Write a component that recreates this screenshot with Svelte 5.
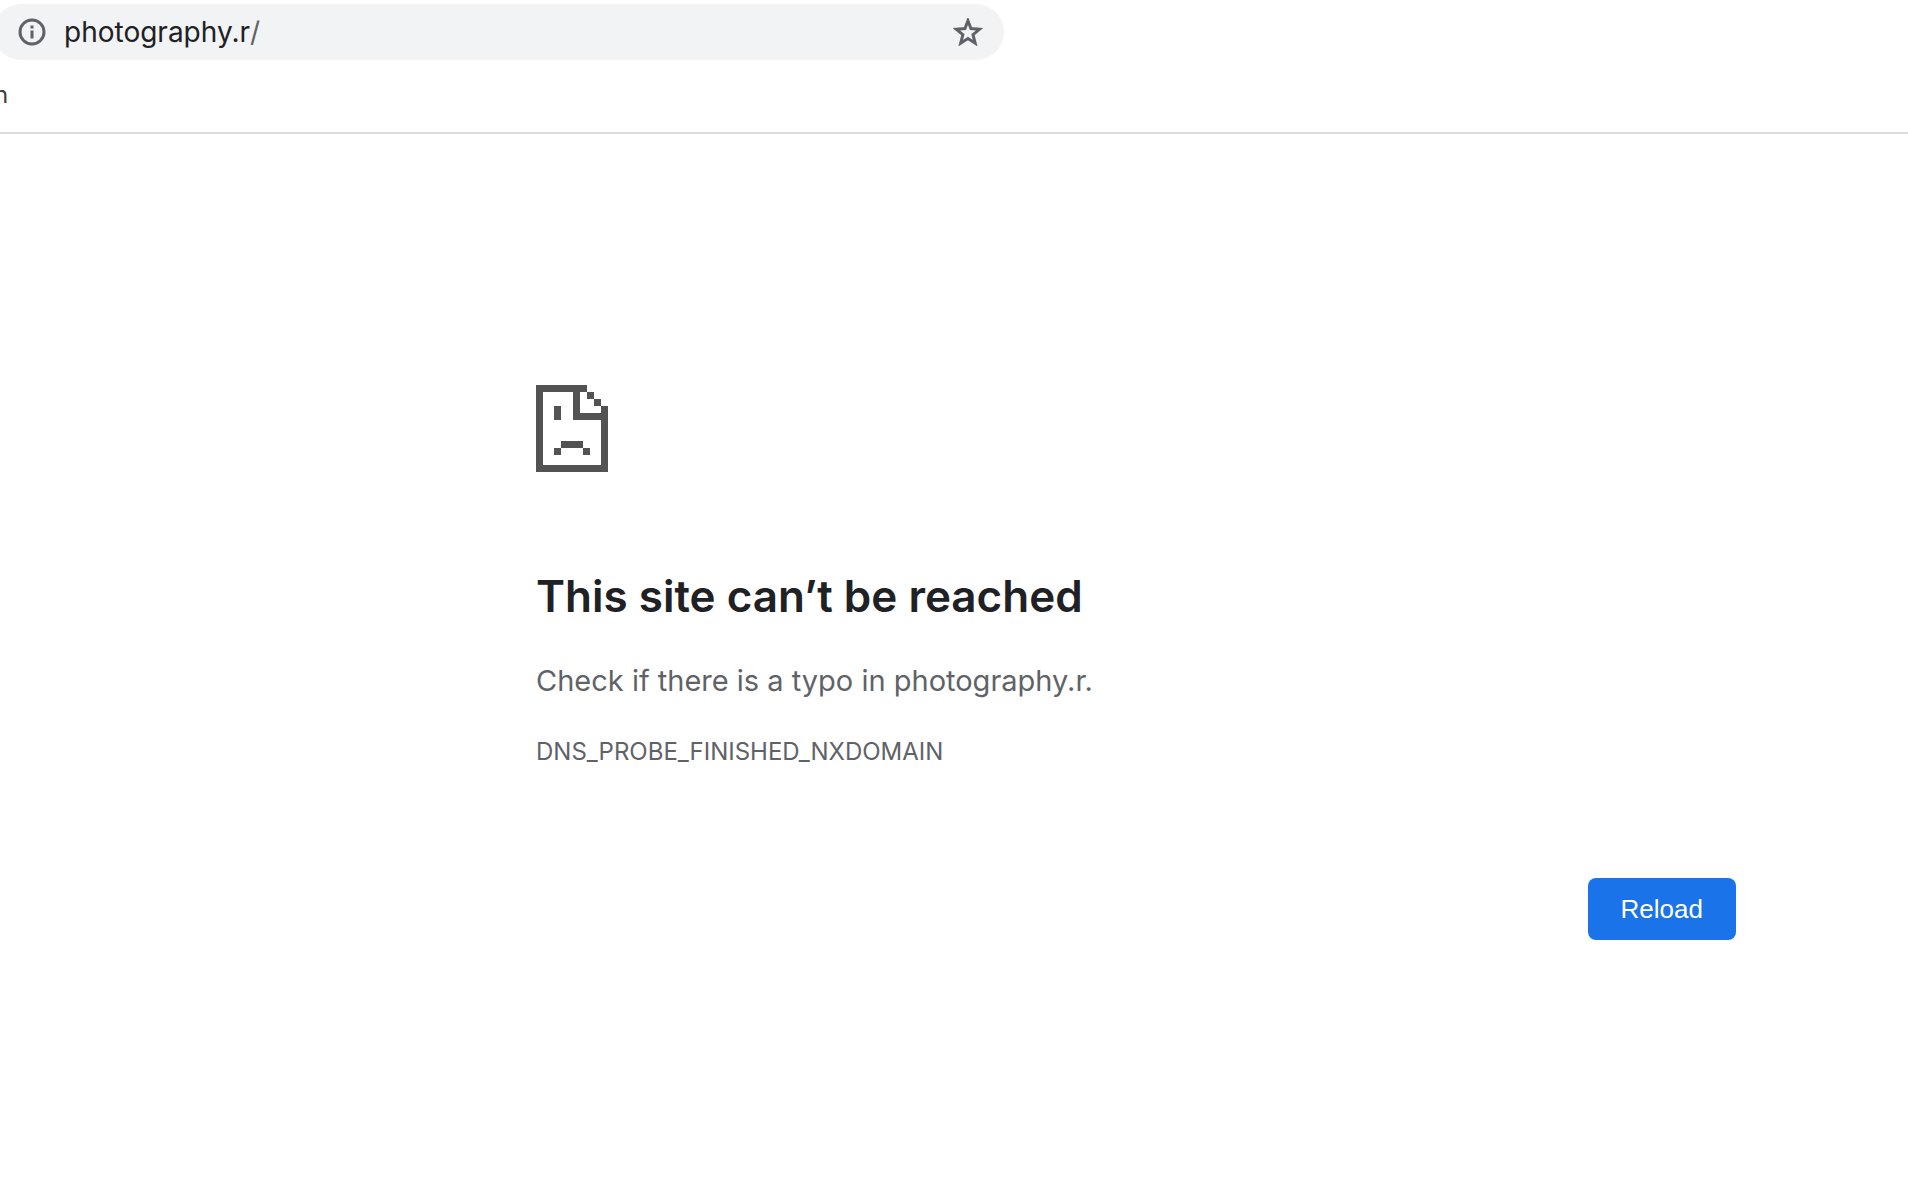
<script>
    let host = $state("photography.r");
    let failedHost = $state("photography.r");

    function reload(e) {
        e.preventDefault();
        failedHost = host;
    }
</script>

<header>
    <form class="omnibox" onsubmit={reload}>
        <button class="icon-btn" type="button" aria-label="View site information">
            <svg width="28" height="28" viewBox="0 0 28 28">
                <circle cx="14" cy="14" r="12" fill="none" stroke="#5f6368" stroke-width="3" />
                <path d="M12.5 7.5h3v3h-3zM12.5 12.5h3v8h-3z" fill="#5f6368" />
            </svg>
        </button>
        <div class="url">
            <input type="text" aria-label="Address bar" spellcheck="false" bind:value={host} />
            <span>/</span>
        </div>
        <button class="icon-btn" type="button" aria-label="Bookmark this page">
            <svg width="30" height="28" viewBox="0 0 30 28">
                <path
                    d="M15 3.8 L17.6 10.7 L25.2 11.2 L19.4 16 L21.3 23.4 L15 19.4 L8.7 23.4 L10.6 16 L4.8 11.2 L12.4 10.7 Z"
                    transform="translate(-2.3 -1.7) scale(1.15)"
                    fill="none"
                    stroke="#5f6368"
                    stroke-width="2.6"
                />
            </svg>
        </button>
    </form>
    <nav class="bookmarks">
        <a href="#bookmark">n</a>
    </nav>
</header>

<main>
    <svg class="sad-page" width="72" height="87" viewBox="0 0 72 87" shape-rendering="crispEdges">
        <g fill="#535353">
            <path d="M0 0h51v7H44v21h21V21h7v66H0zM7 7v73h58V35H37V7z" fill-rule="evenodd" />
            <path d="M51 7h7v7h-7zM58 14h7v7h-7z" />
            <path d="M18 21h7v14h-7zM25 56h22v7H25zM18 63h7v7h-7zM47 63h7v7h-7z" />
        </g>
    </svg>
    <h1>This site can’t be reached</h1>
    <p>Check if there is a typo in {failedHost}.</p>
    <div class="error-code">DNS_PROBE_FINISHED_NXDOMAIN</div>
    <div class="buttons">
        <button class="reload" onclick={reload}>Reload</button>
    </div>
</main>

<style>
    :global(body) {
        margin: 0;
        background: #fff;
        overflow-x: hidden;
        font-family: Inter, "Liberation Sans", sans-serif;
    }
    header {
        padding-top: 4px;
        border-bottom: 2px solid #dadce0;
    }
    .omnibox {
        display: flex;
        align-items: center;
        box-sizing: border-box;
        width: 53%;
        height: 56px;
        margin-left: -7px;
        padding: 0 21px 0 25px;
        border-radius: 28px;
        background: #f1f3f4;
    }
    .icon-btn {
        display: flex;
        padding: 0;
        border: none;
        background: none;
        cursor: pointer;
    }
    .url {
        display: flex;
        flex: 1;
        margin-left: 18px;
        font-size: 28px;
        line-height: 36px;
        color: #5f6368;
    }
    .url input {
        field-sizing: content;
        padding: 0;
        border: none;
        outline: none;
        background: none;
        font: inherit;
        color: #202124;
    }
    .bookmarks {
        height: 72px;
        margin-left: -6px;
        line-height: 70px;
    }
    .bookmarks a {
        font-size: 24px;
        color: #3c4043;
        text-decoration: none;
    }
    main {
        padding: 251px 172px 0 536px;
        color: #5f6368;
    }
    .sad-page {
        display: block;
    }
    h1 {
        margin: 94px 0 0;
        font-size: 44px;
        font-weight: 600;
        line-height: 60px;
        color: #202124;
    }
    p {
        margin: 32px 0 0;
        font-size: 29px;
        line-height: 46px;
    }
    .error-code {
        margin-top: 30px;
        font-size: 24px;
        line-height: 36px;
    }
    .buttons {
        display: flex;
        justify-content: flex-end;
        margin-top: 108px;
    }
    .reload {
        height: 62px;
        padding: 0 33px;
        border: none;
        border-radius: 8px;
        background: #1a73e8;
        color: #fff;
        font-family: "Liberation Sans", Arial, sans-serif;
        font-size: 26px;
        cursor: pointer;
    }
</style>
